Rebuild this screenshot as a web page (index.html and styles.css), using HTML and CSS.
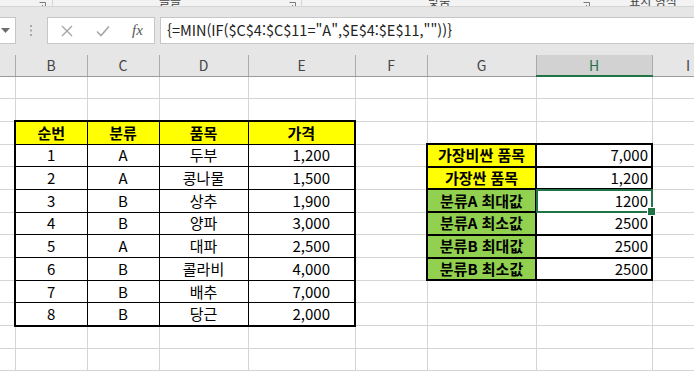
FILE: index.html
```html
<!DOCTYPE html>
<html lang="ko">
<head>
  <meta charset="UTF-8">
  <meta name="viewport" content="width=device-width, initial-scale=1.0">
  <title>분류별 최대값 최소값</title>
  <link rel="stylesheet" href="styles.css">
</head>
<body>
  <div class="ribbon">
    <span class="launcher l1"><svg width="7" height="7" viewBox="0 0 7 7"><path d="M0.5 0.5H6.5V6.5M3 3L6 6" fill="none" stroke="#7a7a7a"/></svg></span>
    <span class="sep s1"></span>
    <span class="group-name g1">글꼴</span>
    <span class="launcher l2"><svg width="7" height="7" viewBox="0 0 7 7"><path d="M0.5 0.5H6.5V6.5M3 3L6 6" fill="none" stroke="#7a7a7a"/></svg></span>
    <span class="sep s2"></span>
    <span class="group-name g2">맞춤</span>
    <span class="launcher l3"><svg width="7" height="7" viewBox="0 0 7 7"><path d="M0.5 0.5H6.5V6.5M3 3L6 6" fill="none" stroke="#7a7a7a"/></svg></span>
    <span class="group-name g3">표시 형식</span>
  </div>

  <div class="formula-row">
    <div class="name-box">
      <svg width="9" height="5" viewBox="0 0 9 5"><path d="M0 0H9L4.5 5Z" fill="#6d6d6d"/></svg>
    </div>
    <div class="grip">
      <svg width="3" height="11" viewBox="0 0 3 11"><rect x="0" y="0" width="2" height="2" fill="#a8a8a8"/><rect x="0" y="4.5" width="2" height="2" fill="#a8a8a8"/><rect x="0" y="9" width="2" height="2" fill="#a8a8a8"/></svg>
    </div>
    <div class="fx-buttons">
      <svg class="btn-x" width="12" height="12" viewBox="0 0 12 12"><path d="M1 1L11 11M11 1L1 11" stroke="#a6a6a6" stroke-width="1.4"/></svg>
      <svg class="btn-ok" width="14" height="12" viewBox="0 0 14 12"><path d="M1 6.5L5 10.5L13 1.5" fill="none" stroke="#a6a6a6" stroke-width="1.6"/></svg>
      <span class="fx">fx</span>
    </div>
    <div class="formula">{=MIN(IF($C$4:$C$11="A",$E$4:$E$11,""))}</div>
  </div>

  <table class="sheet">
    <colgroup>
      <col class="c-a"><col class="c-b"><col class="c-c"><col class="c-d"><col class="c-e">
      <col class="c-f"><col class="c-g"><col class="c-h"><col class="c-i">
    </colgroup>
    <thead>
      <tr><th></th><th>B</th><th>C</th><th>D</th><th>E</th><th>F</th><th>G</th><th class="active">H</th><th>I</th></tr>
    </thead>
    <tbody>
      <tr><td></td><td></td><td></td><td></td><td></td><td></td><td></td><td></td><td></td></tr>
      <tr><td></td><td></td><td></td><td></td><td></td><td></td><td></td><td></td><td></td></tr>
      <tr class="top">
        <td></td>
        <td class="t first head">순번</td><td class="t head">분류</td><td class="t head">품목</td><td class="t last head">가격</td>
        <td></td><td></td><td></td><td></td>
      </tr>
      <tr>
        <td></td>
        <td class="t first">1</td><td class="t">A</td><td class="t">두부</td><td class="t last num">1,200</td>
        <td></td><td class="k label yellow">가장비싼 품목</td><td class="k val">7,000</td><td></td>
      </tr>
      <tr>
        <td></td>
        <td class="t first">2</td><td class="t">A</td><td class="t">콩나물</td><td class="t last num">1,500</td>
        <td></td><td class="k label yellow">가장싼 품목</td><td class="k val">1,200</td><td></td>
      </tr>
      <tr>
        <td></td>
        <td class="t first">3</td><td class="t">B</td><td class="t">상추</td><td class="t last num">1,900</td>
        <td></td><td class="k label green">분류A 최대값</td><td class="k val sel">1200</td><td></td>
      </tr>
      <tr>
        <td></td>
        <td class="t first">4</td><td class="t">B</td><td class="t">양파</td><td class="t last num">3,000</td>
        <td></td><td class="k label green">분류A 최소값</td><td class="k val">2500</td><td></td>
      </tr>
      <tr>
        <td></td>
        <td class="t first">5</td><td class="t">A</td><td class="t">대파</td><td class="t last num">2,500</td>
        <td></td><td class="k label green">분류B 최대값</td><td class="k val">2500</td><td></td>
      </tr>
      <tr>
        <td></td>
        <td class="t first">6</td><td class="t">B</td><td class="t">콜라비</td><td class="t last num">4,000</td>
        <td></td><td class="k label green">분류B 최소값</td><td class="k val">2500</td><td></td>
      </tr>
      <tr>
        <td></td>
        <td class="t first">7</td><td class="t">B</td><td class="t">배추</td><td class="t last num">7,000</td>
        <td></td><td></td><td></td><td></td>
      </tr>
      <tr class="bottom">
        <td></td>
        <td class="t first">8</td><td class="t">B</td><td class="t">당근</td><td class="t last num">2,000</td>
        <td></td><td></td><td></td><td></td>
      </tr>
      <tr><td></td><td></td><td></td><td></td><td></td><td></td><td></td><td></td><td></td></tr>
      <tr><td></td><td></td><td></td><td></td><td></td><td></td><td></td><td></td><td></td></tr>
    </tbody>
  </table>
</body>
</html>
```

FILE: styles.css
```css
* { box-sizing: border-box; }
body {
  margin: 0;
  width: 694px;
  height: 373px;
  overflow: hidden;
  background: #fff;
  color: #000;
  font-family: "Noto Sans CJK KR", "Noto Sans", sans-serif;
}

/* bottom edge of the ribbon */
.ribbon {
  display: flex;
  align-items: flex-end;
  height: 7px;
  overflow: hidden;
  background: #f3f3f3;
  border-bottom: 1px solid #d5d5d5;
}
.group-name {
  font-size: 12px;
  line-height: 16px;
  color: #444;
  margin-bottom: -3px;
  white-space: nowrap;
}
.launcher { display: block; height: 7px; margin-bottom: -3px; }
.launcher svg { display: block; }
.sep { width: 1px; height: 6px; background: #d5d5d5; }
.l1 { margin-left: 39px; }
.s1 { margin-left: 6px; }
.g1 { margin-left: 106px; }
.l2 { margin-left: 108px; }
.s2 { margin-left: 5px; }
.g2 { margin-left: 126px; }
.l3 { margin-left: 133px; }
.g3 { margin-left: 39px; }

/* formula bar */
.formula-row {
  display: flex;
  height: 48px;
  padding: 10px 0 11px;
  background: #e6e6e6;
}
.name-box {
  width: 16px;
  display: flex;
  align-items: center;
  padding-left: 1px;
  background: #fff;
  border: 1px solid #c6c6c6;
  border-left: none;
}
.grip {
  width: 31px;
  display: flex;
  align-items: center;
  padding-left: 14px;
}
.grip svg { display: block; }
.fx-buttons {
  width: 108px;
  display: flex;
  align-items: center;
  background: #fff;
  border: 1px solid #c6c6c6;
}
.btn-x { margin-left: 13px; }
.btn-ok { margin-left: 23px; }
.fx {
  margin-left: 22px;
  font-family: "Liberation Serif", "DejaVu Serif", serif;
  font-style: italic;
  font-size: 15px;
  color: #555;
}
.formula {
  flex: 1;
  margin-left: 5px;
  padding-left: 6px;
  background: #fff;
  border: 1px solid #c6c6c6;
  border-right: none;
  font-size: 14.5px;
  line-height: 24px;
  color: #222;
  white-space: nowrap;
}

/* worksheet */
.sheet {
  border-collapse: collapse;
  table-layout: fixed;
  width: 724px;
}
.c-a { width: 15px; }
.c-b { width: 72px; }
.c-c { width: 72px; }
.c-d { width: 89px; }
.c-e { width: 107px; }
.c-f { width: 72px; }
.c-g { width: 109px; }
.c-h { width: 116px; }
.c-i { width: 72px; }

.sheet th {
  height: 21px;
  padding: 0;
  background: #e6e6e6;
  border-right: 1px solid #ababab;
  border-bottom: 1px solid #9b9b9b;
  font-weight: normal;
  font-size: 14px;
  line-height: 18px;
  color: #444;
}
.sheet th.active {
  background: #d2d2d2;
  color: #217346;
  border-bottom: 2px solid #217346;
}
.sheet tbody tr { height: 22.7px; }
.sheet td {
  padding: 0 4px;
  border: 1px solid #d4d4d4;
  font-size: 15px;
  line-height: 20px;
  text-align: center;
  white-space: nowrap;
  overflow: hidden;
}
.sheet td:first-child { border-left: none; }

/* price list */
.sheet td.t { border: 1px solid #000; }
.sheet td.t.first { border-left-width: 2px; }
.sheet td.t.last { border-right-width: 2px; }
.top td.t { border-top-width: 2px; }
.bottom td.t { border-bottom-width: 2px; }
.head { background: #ffff00; font-weight: bold; }
.sheet td.num { text-align: right; padding-right: 24px; }

/* summary */
.sheet td.k { border: 2px solid #000; }
.label { font-weight: bold; }
.yellow { background: #ffff00; }
.green { background: #92d050; }
.sheet td.val { text-align: right; padding-right: 3px; }

/* active cell */
.sheet td.sel { position: relative; overflow: visible; }
.sel::after {
  content: "";
  position: absolute;
  left: -1px;
  top: -1px;
  right: -2px;
  bottom: -2px;
  border: 2px solid #217346;
}
.sel::before {
  content: "";
  position: absolute;
  right: -5px;
  bottom: -5px;
  width: 7px;
  height: 7px;
  background: #217346;
  border: 1px solid #fff;
  z-index: 1;
}
```
